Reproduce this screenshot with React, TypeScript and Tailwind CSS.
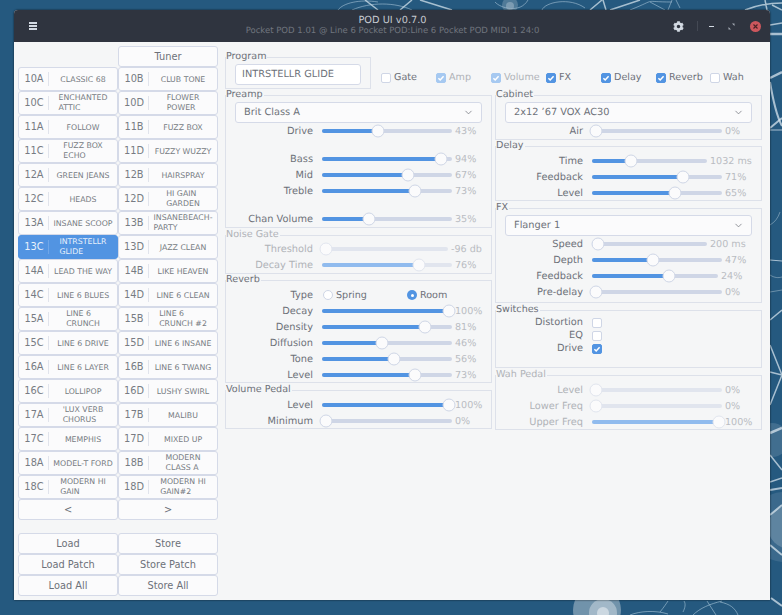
import React from "react"
import { ChevronDown } from "lucide-react"
import { FaCog } from "react-icons/fa"

type Row = { label: string; value: string; pos: number; valueW?: string; disabled?: boolean }

const patches: [string, string][] = [
  ["10A", "CLASSIC 68"], ["10B", "CLUB TONE"],
  ["10C", "ENCHANTED\nATTIC"], ["10D", "FLOWER\nPOWER"],
  ["11A", "FOLLOW"], ["11B", "FUZZ BOX"],
  ["11C", "FUZZ BOX\nECHO"], ["11D", "FUZZY WUZZY"],
  ["12A", "GREEN JEANS"], ["12B", "HAIRSPRAY"],
  ["12C", "HEADS"], ["12D", "HI GAIN\nGARDEN"],
  ["13A", "INSANE SCOOP"], ["13B", "INSANEBEACH-\nPARTY"],
  ["13C", "INTRSTELLR\nGLIDE"], ["13D", "JAZZ CLEAN"],
  ["14A", "LEAD THE WAY"], ["14B", "LIKE HEAVEN"],
  ["14C", "LINE 6 BLUES"], ["14D", "LINE 6 CLEAN"],
  ["15A", "LINE 6\nCRUNCH"], ["15B", "LINE 6\nCRUNCH #2"],
  ["15C", "LINE 6 DRIVE"], ["15D", "LINE 6 INSANE"],
  ["16A", "LINE 6 LAYER"], ["16B", "LINE 6 TWANG"],
  ["16C", "LOLLIPOP"], ["16D", "LUSHY SWIRL"],
  ["17A", "'LUX VERB\nCHORUS"], ["17B", "MALIBU"],
  ["17C", "MEMPHIS"], ["17D", "MIXED UP"],
  ["18A", "MODEL-T FORD"], ["18B", "MODERN\nCLASS A"],
  ["18C", "MODERN HI\nGAIN"], ["18D", "MODERN HI\nGAIN#2"],
]

function Btn({ children, className = "" }: { children: React.ReactNode; className?: string }) {
  return (
    <button className={`h-[21px] pt-px border border-[#d5dae8] rounded-[3px] bg-[#fbfbfc] text-[9.8px] text-[#6d7179] flex items-center justify-center ${className}`}>
      {children}
    </button>
  )
}

function Patch({ id, name }: { id: string; name: string }) {
  const active = id === "13C"
  return (
    <button
      className={`h-6 border rounded-[3px] flex items-center text-left ${
        active ? "bg-[#5294e2] border-[#5294e2] text-[#e8f0fb]" : "bg-[#fbfbfc] border-[#d5dae8] text-[#777b83]"
      }`}
    >
      <span className="w-7 ml-px pt-px shrink-0 text-center text-[9.8px]">{id}</span>
      <span className={`w-px h-[14px] shrink-0 ${active ? "bg-[#6fa6e8]" : "bg-[#e1e4ec]"}`} />
      <span className={`flex-1 flex justify-center ${name.includes("\n") ? "" : "pt-px"}`}>
        <span className="whitespace-pre-line text-[7.8px] leading-[10px]">{name}</span>
      </span>
    </button>
  )
}

function Slider({ label, value, pos, valueW = "w-[30px]", disabled }: Row) {
  const at = `calc(3.5px + ${pos} * (100% - 7px))`
  return (
    <div className="flex h-4 items-center">
      <span className={`w-[87px] pt-[2px] shrink-0 text-right text-[9.8px] ${disabled ? "text-[#b0b3b8]" : "text-[#6d7179]"}`}>{label}</span>
      <div className={`relative ml-[9px] flex-1 h-[4px] rounded-full ${disabled ? "bg-[#e1e5ee]" : "bg-[#cfd6e6]"}`}>
        <div className={`h-full rounded-full ${disabled ? "bg-[#90bbee]" : "bg-[#5294e2]"}`} style={{ width: at }} />
        <div
          className={`absolute top-1/2 w-[13px] h-[13px] -translate-x-1/2 -translate-y-1/2 rounded-full border bg-[#fbfbfc] ${disabled ? "border-[#e1e5ee]" : "border-[#cfd6e6]"}`}
          style={{ left: at }}
        />
      </div>
      <span className={`${valueW} shrink-0 pl-[3px] pt-[2px] text-[#b9bcc2] whitespace-nowrap`}>{value}</span>
    </div>
  )
}

function Group({ title, className, disabled, children }: { title: string; className: string; disabled?: boolean; children: React.ReactNode }) {
  return (
    <fieldset className={`border border-[#dde1ea] pr-[9px] ${className}`}>
      <legend className={`p-0 pr-px leading-[13px] ${disabled ? "text-[#b0b3b8]" : "text-[#6d7179]"}`}>
        <span className="relative -top-px">{title}</span>
      </legend>
      {children}
    </fieldset>
  )
}

function Combo({ text }: { text: string }) {
  return (
    <div className="ml-[9px] h-[21px] pl-2 pr-[7px] border border-[#d5dae8] rounded-[3px] bg-[#fbfbfc] flex items-center justify-between text-[9.8px] text-[#6d7179]">
      <span className="pt-px">{text}</span>
      <ChevronDown className="w-[11px] h-[11px]" strokeWidth={1.6} />
    </div>
  )
}

function Check({ checked, dim }: { checked?: boolean; dim?: boolean }) {
  return (
    <span
      className={`w-[10px] h-[10px] shrink-0 rounded-[2px] border flex items-center justify-center ${
        checked ? (dim ? "bg-[#a6c9f1] border-[#a6c9f1]" : "bg-[#5294e2] border-[#5294e2]") : "bg-white border-[#cfd6e6]"
      }`}
    >
      {checked && (
        <svg viewBox="0 0 10 10" className="w-[10px] h-[10px] shrink-0">
          <path d="M2.4 5.2 L4.2 7 L7.6 3.2" fill="none" stroke="#fff" strokeWidth="1.5" />
        </svg>
      )}
    </span>
  )
}

function TopCheck({ label, checked, dim }: { label: string; checked?: boolean; dim?: boolean }) {
  return (
    <div className="flex items-center gap-[3px]">
      <Check checked={checked} dim={dim} />
      <span className={dim ? "text-[#b0b3b8]" : "text-[#6d7179]"}>{label}</span>
    </div>
  )
}

function SwitchRow({ label, checked }: { label: string; checked?: boolean }) {
  return (
    <div className="flex h-[13px] items-center">
      <span className="w-[87px] pt-px text-right text-[9.8px]">{label}</span>
      <span className="ml-[9px]"><Check checked={checked} /></span>
    </div>
  )
}

function Radio({ label, checked, className }: { label: string; checked?: boolean; className: string }) {
  return (
    <div className={`flex items-center gap-[3px] ${className}`}>
      <span className={`w-[10px] h-[10px] rounded-full flex items-center justify-center ${checked ? "bg-[#5294e2]" : "bg-white border border-[#cfd6e6]"}`}>
        {checked && <span className="w-[3px] h-[3px] rounded-full bg-white" />}
      </span>
      <span className="pt-[2px]">{label}</span>
    </div>
  )
}

function Wallpaper() {
  return (
    <svg className="absolute inset-0 w-full h-full" viewBox="0 0 782 615" fill="none">
      <circle cx="510" cy="5" r="8" fill="#fff" fillOpacity="0.2" />
      <circle cx="510" cy="6" r="4" fill="#fff" fillOpacity="0.25" />
      <g stroke="#a6c3d7" strokeOpacity="0.6" strokeWidth="1">
        <path d="M338 10 C343 3 360 -1 378 2 M352 10 C370 2 395 2 412 10" />
        <path d="M495 2 C500 8 520 14 528 0 M542 10 C545 2 570 -3 585 8 M630 10 C660 -2 640 2 672 2" />
        <path d="M650 2 L665 10 M676 0 L680 8 M668 10 L672 0" />
      </g>
      <g stroke="#c8d9e5" strokeOpacity="0.8" strokeWidth="1.5">
        <path d="M400 10 L412 0 M365 0 L378 10 M420 0 L452 10 M590 10 L602 0 M603 0 L606 10 M610 10 L640 0" />
        <path d="M745 10 C755 6 770 3 782 3 M765 0 L767 10 M772 5 L782 10" />
      </g>
      <g stroke="#d5e3ec" strokeOpacity="0.75">
        <path d="M770 25 L782 23" strokeWidth="1.5" />
        <path d="M770 34 L782 34" strokeWidth="2.5" />
        <path d="M770 78 L782 72" strokeWidth="2.5" />
        <path d="M770 82 C773 100 776 115 782 126" strokeWidth="2" />
        <path d="M770 128 L782 118" strokeWidth="2" />
        <path d="M770 130 L782 130 M770 260 L782 261" strokeWidth="1" />
        <path d="M770 225 C775 222 778 218 780 212 M770 275 C775 278 778 278 782 277 M770 292 L782 290" strokeWidth="1" strokeOpacity="0.4" />
        <path d="M770 320 L782 310" strokeWidth="1.5" />
        <path d="M770 345 L782 375 M770 405 L782 375 M770 372 L782 375" strokeWidth="1.5" />
        <path d="M770 433 L782 428" strokeWidth="2.5" />
        <path d="M770 455 L782 470 M770 482 L782 478" strokeWidth="1.5" />
        <path d="M770 490 L782 488 M770 515 L782 505 M770 545 L782 555 M771 598 L782 606" strokeWidth="2" />
      </g>
      <circle cx="772" cy="440" r="17" fill="#fff" fillOpacity="0.13" />
      <circle cx="784" cy="527" r="35" fill="#fff" fillOpacity="0.1" />
      <circle cx="790" cy="527" r="22" fill="#fff" fillOpacity="0.18" />
      <circle cx="597" cy="610" r="24" fill="#fff" fillOpacity="0.35" />
      <circle cx="603" cy="613" r="14" fill="#fff" fillOpacity="0.35" />
      <circle cx="603" cy="613" r="6" fill="#fff" fillOpacity="0.45" />
      <g stroke="#a9c6d9" strokeOpacity="0.6" strokeWidth="1">
        <path d="M630 615 C640 611 655 610 668 614 M660 612 C664 607 666 604 668 601 M683 612 C685 608 686 604 684 601" />
        <path d="M693 615 C700 608 710 604 722 601 M707 601 L716 615 M720 602 C730 604 735 608 738 615" />
      </g>
    </svg>
  )
}

export default function App() {
  return (
    <div className="relative w-[782px] h-[615px] overflow-hidden bg-[#25597f] font-['DejaVu_Sans',sans-serif] text-[9.6px] text-[#6d7179] [text-rendering:geometricPrecision]">
      <Wallpaper />
      <div className="relative ml-[14px] mt-[10px] w-[756px] h-[590px] rounded-t-[4px] bg-[#f5f6f7] shadow-[0_0_2px_rgba(0,0,0,0.8)] overflow-hidden">
        <header className="h-8 bg-[#2f343f] flex items-center pr-[9px]">
          <div className="flex-1 pl-[15px]">
            <div className="flex flex-col gap-px w-2">
              <span className="h-[2px] bg-[#d3dae3]" />
              <span className="h-[2px] bg-[#d3dae3]" />
              <span className="h-[2px] bg-[#d3dae3]" />
            </div>
          </div>
          <div className="flex flex-col items-center leading-[11px] mr-[5px]">
            <span className="text-[9.8px] text-[#c6cad1]">POD UI v0.7.0</span>
            <span className="text-[8.5px] text-[#6f747e] whitespace-nowrap">Pocket POD 1.01 @ Line 6 Pocket POD:Line 6 Pocket POD MIDI 1 24:0</span>
          </div>
          <div className="flex-1 flex items-center justify-end text-[#d3dae3]">
            <FaCog className="w-[11px] h-[11px]" />
            <span className="w-px h-[10px] bg-[#444954] ml-[13px]" />
            <span className="w-[5px] h-px bg-[#d3dae3] ml-[11px]" />
            <svg viewBox="0 0 7 7" className="w-[7px] h-[7px] ml-[14px]" fill="#a9afb9">
              <path d="M4 0.5 H6.5 V3 Z M0.5 4 V6.5 H3 Z" />
            </svg>
            <span className="ml-[15px] w-[11px] h-[11px] rounded-full bg-[#cc575d] flex items-center justify-center">
              <svg viewBox="0 0 7 7" className="w-[7px] h-[7px]">
                <path d="M1.5 1.5 L5.5 5.5 M5.5 1.5 L1.5 5.5" stroke="#4a2226" strokeWidth="1.1" />
              </svg>
            </span>
          </div>
        </header>

        <div className="flex pl-1 pt-1">
          <div className="w-[200px] shrink-0">
            <div className="grid grid-cols-2">
              <Btn className="col-start-2">Tuner</Btn>
              {patches.map(([id, name]) => (
                <Patch key={id} id={id} name={name} />
              ))}
              <Btn>&lt;</Btn>
              <Btn>&gt;</Btn>
            </div>
            <div className="grid grid-cols-2 mt-[13px]">
              <Btn>Load</Btn>
              <Btn>Store</Btn>
              <Btn>Load Patch</Btn>
              <Btn>Store Patch</Btn>
              <Btn>Load All</Btn>
              <Btn>Store All</Btn>
            </div>
          </div>

          <div className="ml-[7px] pt-[5px] w-[537px] shrink-0">
            <div className="flex">
              <Group title="Program" className="w-[146px] h-[38px]">
                <div className="ml-[9px] h-[21px] pl-[6px] pt-px border border-[#d5dae8] rounded-[3px] bg-white flex items-center text-[9.8px] whitespace-nowrap">
                  INTRSTELLR GLIDE
                </div>
              </Group>
              <div className="ml-[10px] mt-[20px] h-[11px] grid grid-cols-[55px_55px_55px_55px_55px_54px_auto]">
                <TopCheck label="Gate" />
                <TopCheck label="Amp" checked dim />
                <TopCheck label="Volume" checked dim />
                <TopCheck label="FX" checked />
                <TopCheck label="Delay" checked />
                <TopCheck label="Reverb" checked />
                <TopCheck label="Wah" />
              </div>
            </div>

            <div className="flex gap-[3px]">
              <div className="w-[267px] shrink-0">
                <Group title="Preamp" className="h-[139px]">
                  <Combo text="Brit Class A" />
                  <Slider label="Drive" value="43%" pos={0.43} />
                  <div className="h-3" />
                  <Slider label="Bass" value="94%" pos={0.94} />
                  <Slider label="Mid" value="67%" pos={0.67} />
                  <Slider label="Treble" value="73%" pos={0.73} />
                  <div className="h-3" />
                  <Slider label="Chan Volume" value="35%" pos={0.35} />
                </Group>
                <Group title="Noise Gate" disabled className="h-[45px] mt-px">
                  <div className="-mt-px">
                    <Slider label="Threshold" value="-96 db" pos={0} valueW="w-[34px]" disabled />
                    <Slider label="Decay Time" value="76%" pos={0.76} disabled />
                  </div>
                </Group>
                <Group title="Reverb" className="h-[109px]">
                  <div className="flex h-4 items-center">
                    <span className="w-[87px] pt-[2px] text-right text-[9.8px]">Type</span>
                    <Radio label="Spring" className="ml-[9px] pl-px w-[85px]" />
                    <Radio label="Room" checked className="" />
                  </div>
                  <Slider label="Decay" value="100%" pos={1} />
                  <Slider label="Density" value="81%" pos={0.81} />
                  <Slider label="Diffusion" value="46%" pos={0.46} />
                  <Slider label="Tone" value="56%" pos={0.56} />
                  <Slider label="Level" value="73%" pos={0.73} />
                </Group>
                <Group title="Volume Pedal" className="h-[45px] mt-px">
                  <Slider label="Level" value="100%" pos={1} />
                  <Slider label="Minimum" value="0%" pos={0} />
                </Group>
              </div>

              <div className="w-[267px] shrink-0">
                <Group title="Cabinet" className="h-[51px]">
                  <Combo text="2x12 ’67 VOX AC30" />
                  <Slider label="Air" value="0%" pos={0} />
                </Group>
                <Group title="Delay" className="h-[61px]">
                  <Slider label="Time" value="1032 ms" pos={0.33} valueW="w-[45px]" />
                  <Slider label="Feedback" value="71%" pos={0.71} />
                  <Slider label="Level" value="65%" pos={0.65} />
                </Group>
                <Group title="FX" className="h-[101px] mt-px">
                  <Combo text="Flanger 1" />
                  <Slider label="Speed" value="200 ms" pos={0.02} valueW="w-[45px]" />
                  <Slider label="Depth" value="47%" pos={0.47} />
                  <Slider label="Feedback" value="24%" pos={0.62} valueW="w-[34px]" />
                  <Slider label="Pre-delay" value="0%" pos={0} />
                </Group>
                <Group title="Switches" className="h-[64px] mt-px">
                  <div className="-mt-px">
                    <SwitchRow label="Distortion" />
                    <SwitchRow label="EQ" />
                    <SwitchRow label="Drive" checked />
                  </div>
                </Group>
                <Group title="Wah Pedal" disabled className="h-[61px] mt-px">
                  <Slider label="Level" value="0%" pos={0} disabled />
                  <Slider label="Lower Freq" value="0%" pos={0} disabled />
                  <Slider label="Upper Freq" value="100%" pos={1} disabled />
                </Group>
              </div>
            </div>
          </div>
        </div>
      </div>
    </div>
  )
}
